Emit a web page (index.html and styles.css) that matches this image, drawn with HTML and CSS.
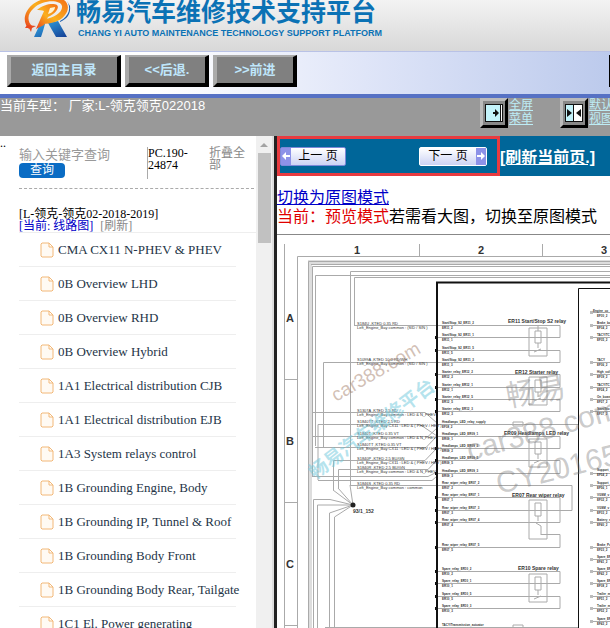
FILE: index.html
```html
<!DOCTYPE html>
<html lang="zh-CN">
  <head>
    <meta charset="UTF-8" />
    <title>畅易汽车维修技术支持平台</title>
    <link rel="stylesheet" href="styles.css">
  </head>
  <body>
    <header class="brand">
      <svg class="logo" width="48" height="38" viewBox="0 0 48 38">
        <defs>
          <linearGradient id="fire" x1="0" y1="1" x2="1" y2="0">
            <stop offset="0" stop-color="#e8401c" />
            <stop offset="0.5" stop-color="#fbb01e" />
            <stop offset="1" stop-color="#f36c16" />
          </linearGradient>
          <linearGradient id="leg" x1="0" y1="0" x2="1" y2="1">
            <stop offset="0" stop-color="#35b0ea" />
            <stop offset="1" stop-color="#153f95" />
          </linearGradient>
        </defs>
        <path d="M16 24 L21 24 L19 31 L17 37 L10 37 Z M24 23 L34 21 L43 37 L32 37 Z" fill="url(#leg)" />
        <path d="M36 21 C46 16 47 7 43 1 L46 6 C47 14 43 19 36 22 Z" fill="#1c5fae" />
        <path d="M5 29 C-2 22 0 12 8 5 C16 -2 33 -5 40 0 C48 6 43 18 31 22 C27 23 22 24 19 24 L21 19 C30 18 39 12 38 6 C36 -1 18 0 10 8 C3 14 3 21 8 26 Z" fill="url(#fire)" />
        <path d="M13 10 C20 4 29 3 33 5 C36 8 31 14 24 17 L20 25 L12 29 L20 11 C18 10 15 10 13 10 Z" fill="url(#fire)" />
        <path d="M26 8 L31 7 C31 10 28 13 24 14 Z" fill="#fff3d0" />
        <path d="M3 25 L12 26 L8 28 L7 32 L5 28 L1 28 Z" fill="#e8481f" />
      </svg>
      <div class="brand-text">
        <h1>畅易汽车维修技术支持平台</h1>
        <p>CHANG YI AUTO MAINTENANCE TECHNOLOGY SUPPORT PLATFORM</p>
      </div>
    </header>

    <div class="toolbar">
      <button type="button" class="tool wide">返回主目录</button>
      <button type="button" class="tool">&lt;&lt;后退.</button>
      <button type="button" class="tool">&gt;&gt;前进</button>
      <span class="toolbar-end"></span>
    </div>

    <div class="status">
      <span class="model">当前车型： 厂家:L-领克领克022018</span>
      <div class="views">
        <div class="view">
          <button type="button" aria-label="全屏菜单">
            <svg width="20" height="20" viewBox="0 0 20 20">
              <rect x="1" y="1" width="18" height="18" fill="#111" />
              <rect x="2" y="2" width="14" height="16" fill="#c4f3fa" />
              <rect x="17" y="2" width="1" height="16" fill="#fff" />
              <path d="M9 9h2V6l4 4l-4 4v-3H9Z" fill="#111" />
            </svg>
          </button>
          <a href="#">全屏<br />菜单</a>
        </div>
        <div class="view">
          <button type="button" aria-label="默认视图">
            <svg width="20" height="20" viewBox="0 0 20 20">
              <rect x="1" y="1" width="18" height="18" fill="#111" />
              <rect x="2" y="2" width="7" height="16" fill="#c4f3fa" />
              <rect x="10" y="2" width="8" height="16" fill="#fff" />
              <path d="M3 6l5 4l-5 4Z M17 6l-5 4l5 4Z" fill="#111" />
            </svg>
          </button>
          <a href="#">默认<br />视图</a>
        </div>
      </div>
    </div>

    <div class="frames">
      <aside class="sidebar">
        <span class="dots">..</span>
        <div class="tree">
          <form class="search">
            <div class="search-box">
              <input type="text" aria-label="关键字" placeholder="输入关键字查询" />
              <button type="button">查询</button>
            </div>
            <div class="code">PC.190-24874</div>
            <a class="fold" href="#">折叠全部</a>
          </form>
          <div class="heading">[L-领克-领克02-2018-2019]</div>
          <div class="current"><b>[当前: 线路图]</b> <a href="#">[刷新]</a></div>
          <ul class="docs">
            <li><svg class="doc"><use href="#doc" /></svg><a href="#">CMA CX11 N-PHEV &amp; PHEV</a></li>
            <li><svg class="doc"><use href="#doc" /></svg><a href="#">0B Overview LHD</a></li>
            <li><svg class="doc"><use href="#doc" /></svg><a href="#">0B Overview RHD</a></li>
            <li><svg class="doc"><use href="#doc" /></svg><a href="#">0B Overview Hybrid</a></li>
            <li><svg class="doc"><use href="#doc" /></svg><a href="#">1A1 Electrical distribution CJB</a></li>
            <li><svg class="doc"><use href="#doc" /></svg><a href="#">1A1 Electrical distribution EJB</a></li>
            <li><svg class="doc"><use href="#doc" /></svg><a href="#">1A3 System relays control</a></li>
            <li><svg class="doc"><use href="#doc" /></svg><a href="#">1B Grounding Engine, Body</a></li>
            <li><svg class="doc"><use href="#doc" /></svg><a href="#">1B Grounding IP, Tunnel &amp; Roof</a></li>
            <li><svg class="doc"><use href="#doc" /></svg><a href="#">1B Grounding Body Front</a></li>
            <li><svg class="doc"><use href="#doc" /></svg><a href="#">1B Grounding Body Rear, Tailgate</a></li>
            <li><svg class="doc"><use href="#doc" /></svg><a href="#">1C1 El. Power generating</a></li>
          </ul>
        </div>
        <div class="scrollbar">
          <svg width="8" height="4" viewBox="0 0 8 4"><path d="M0 4L4 0L8 4Z" fill="#a3a3a3" /></svg>
          <div class="thumb"></div>
        </div>
      </aside>

      <main class="content">
        <div class="pager">
          <div class="pager-box">
            <button type="button" class="page-btn">
              <span class="arrow"><svg width="8" height="8" viewBox="0 0 8 8"><path d="M0 4L4 0V3H8V5H4V8Z" fill="#fff" /></svg></span>
              <span class="page-label">上一 页</span>
            </button>
            <button type="button" class="page-btn next">
              <span class="page-label">下一 页</span>
              <span class="arrow"><svg width="8" height="8" viewBox="0 0 8 8"><path d="M8 4L4 0V3H0V5H4V8Z" fill="#fff" /></svg></span>
            </button>
          </div>
          <a class="refresh" href="#">[刷新当前页.]</a>
        </div>

        <div class="mode">
          <a href="#">切换为原图模式</a>
          <p><span>当前：预览模式</span>若需看大图，切换至原图模式</p>
        </div>

        <!-- Wiring diagram -->
        <svg class="diagram" viewBox="277 235 333 393">
          <!-- Sheet frame -->
          <path class="frame" d="M284.5 244V628M297.5 628V256.5H610M419.5 244V256M542.5 244V256M284 379.5H297M284 502.5H297M284 625.5H297" />
          <g class="grid-ref">
            <text x="357" y="254">1</text>
            <text x="481" y="254">2</text>
            <text x="604" y="254">3</text>
            <text x="290" y="322">A</text>
            <text x="290" y="445">B</text>
            <text x="290" y="568">C</text>
          </g>

          <!-- Harness wires -->
          <path class="bundle" d="M310 628V262H610" />
          <path class="wire" d="M308.500 628V261.500H610M312.500 476V266.500H610M311 264.500H610M315.500 446V275.500H610M350.500 485V271.500H610M354.500 325V277.500H610" />
          <path class="wire" d="M354 325.500H560V337.500H437M437 350.500H560V362.500H323.500V447M437 374.500H560V387.500H437M437 399.500H560V411.500H437" />
          <path class="wire" d="M312 412.500H425L437 423M318 480V424.500H420L437 436M437 424.500H578M312 436.500H428L437 428M315 447.500H426L437 436M333.500 490V460.500H425L437 448M338.500 488V469.500H428L437 460M312 476.500H428L437 472M318 480.500H432L437 476" />
          <path class="wire" d="M437 436.500H560V448.500H437M437 460.500H560V473.500H437M350 485.500H572V510.500H437M437 497.500H560V522.500H437M437 547.500H560V534.500H541" />
          <path class="wire" d="M437 571.500H560V583.500H437M437 596.500H560V608.500H437M325 627.500H578" />
          <path class="wire" d="M333 490L353 505L338 488M350 485L353 505M313.500 628V499.500H330L353 505H317.500V628M329.500 628V513L353 505L334.500 517V628" />
          <path class="box" d="M437 628V282.500H610" />
          <path class="box thin" d="M578.500 628V288.500H610" />
          <circle cx="353" cy="505" r="2.500" fill="#222" />
          <path class="pins" d="M435 337.500h3M435 350.500h3M435 374.500h3M435 387.500h3M435 399.500h3M435 411.500h3M435 448.500h3M435 460.500h3M435 473.500h3M435 497.500h3M435 510.500h3M435 522.500h3M435 547.500h3M435 571.500h3M435 583.500h3M435 596.500h3M435 608.500h3" />

          <!-- Relays -->
          <g class="relay">
            <path d="M529 328h18v28h-18zM535 331h6v12h-6zM538 343v5M534 352l7-3M538 325v6" />
            <path d="M529 377h18v28h-18zM535 380h6v12h-6zM538 392v5M534 401l7-3" />
            <path d="M529 439h18v28h-18zM535 442h6v12h-6zM538 454v5M534 463l7-3" />
            <path d="M529 500h18v39h-18zM535 503h6v13h-6zM538 516v5M536 523l5 3v9" />
            <path d="M529 574h18v28h-18zM535 577h6v13h-6zM538 590v5M534 599l7-3" />
            <path d="M513 422h10v4h-10zM513 625h10v3h-10z" />
          </g>
          <g class="relay-name">
            <text x="508" y="323">ER11 Start/Stop S2 relay</text>
            <text x="515" y="374">ER12 Starter relay</text>
            <text x="504" y="435">ER09 Headlamps LED relay</text>
            <text x="512" y="497">ER07 Rear wiper relay</text>
            <text x="518" y="570">ER10 Spare relay</text>
            <text x="353" y="513">93/1_152</text>
          </g>

          <g class="note">
            <text x="357" y="325">S184U ,KTED 0.35 RD<tspan x="357" dy="4">Left_Engine_Bay common : (SID / SIN )</tspan></text>
            <text x="357" y="361">S1099A ,KTED 10.0 RD/WH<tspan x="357" dy="4">Left_Engine_Bay common : (SID / SIN )</tspan></text>
            <text x="357" y="412">S1307A ,KTED 2.5 RD<tspan x="357" dy="4">Left_Engine_Bay common : LED &amp; N_PHEV</tspan></text>
            <text x="357" y="423">S1840TT ,KTED 2.5 RD<tspan x="357" dy="4">Left_Engine_Bay CX11 : LED &amp; ( PHEV / HEV )</tspan></text>
            <text x="357" y="435">S1840T ,KTED 0.35 VT<tspan x="357" dy="4">Left_Engine_Bay common : LED &amp; N_PHEV</tspan></text>
            <text x="357" y="446">S1840TT ,KTED 0.35 VT<tspan x="357" dy="4">Left_Engine_Bay CX11 : LED &amp; ( PHEV / HEV )</tspan></text>
            <text x="357" y="460">S1840P ,KTED 2.5 BU/GN<tspan x="357" dy="4">Left_Engine_Bay CX11 : LED &amp; ( PHEV / HEV )</tspan></text>
            <text x="357" y="469">S1840R ,KTED 2.5 BU/GN<tspan x="357" dy="4">Left_Engine_Bay common : LED &amp; N_PHEV</tspan></text>
            <text x="357" y="485">S1846S ,KTED 0.35 RD<tspan x="357" dy="4">Left_Engine_Bay common : common</tspan></text>
          </g>

          <g class="note pin">
            <text x="442" y="324">Start/Stop_S2_ER11_2<tspan x="442" dy="5">ER11_2</tspan></text>
            <text x="442" y="336">Start/Stop_S2_ER11_1<tspan x="442" dy="5">ER11_1</tspan></text>
            <text x="442" y="349">Start/Stop_S2_ER11_5<tspan x="442" dy="5">ER11_5</tspan></text>
            <text x="442" y="361">Start/Stop_S2_ER11_3<tspan x="442" dy="5">ER11_3</tspan></text>
            <text x="442" y="373">Starter_relay_ER12_2<tspan x="442" dy="5">ER12_2</tspan></text>
            <text x="442" y="386">Starter_relay_ER12_1<tspan x="442" dy="5">ER12_1</tspan></text>
            <text x="442" y="398">Starter_relay_ER12_5<tspan x="442" dy="5">ER12_5</tspan></text>
            <text x="442" y="410">Starter_relay_ER12_3<tspan x="442" dy="5">ER12_3</tspan></text>
            <text x="442" y="423">Headlamps_LED_relay_supply<tspan x="442" dy="5">EF38_2</tspan></text>
            <text x="442" y="435">Headlamps_LED_ER09_1<tspan x="442" dy="5">ER09_1</tspan></text>
            <text x="442" y="447">Headlamps_LED_ER09_2<tspan x="442" dy="5">ER09_2</tspan></text>
            <text x="442" y="459">Headlamps_LED_ER09_5<tspan x="442" dy="5">ER09_5</tspan></text>
            <text x="442" y="472">Headlamps_LED_ER09_3<tspan x="442" dy="5">ER09_3</tspan></text>
            <text x="442" y="484">Rear_wiper_relay_ER07_2<tspan x="442" dy="5">ER07_2</tspan></text>
            <text x="442" y="496">Rear_wiper_relay_ER07_1<tspan x="442" dy="5">ER07_1</tspan></text>
            <text x="442" y="509">Rear_wiper_relay_ER07_3<tspan x="442" dy="5">ER07_3</tspan></text>
            <text x="442" y="521">Rear_wiper_relay_ER07_4<tspan x="442" dy="5">ER07_4</tspan></text>
            <text x="442" y="546">Rear_wiper_relay_ER07_5<tspan x="442" dy="5">ER07_5</tspan></text>
            <text x="442" y="570">Spare_relay_ER10_2<tspan x="442" dy="5">ER10_2</tspan></text>
            <text x="442" y="582">Spare_relay_ER10_1<tspan x="442" dy="5">ER10_1</tspan></text>
            <text x="442" y="595">Spare_relay_ER10_5<tspan x="442" dy="5">ER10_5</tspan></text>
            <text x="442" y="607">Spare_relay_ER10_3<tspan x="442" dy="5">ER10_3</tspan></text>
            <text x="442" y="626">TACY/Transmission_actuator</text>
          </g>

          <path class="wire" d="M593 312.500H610M593 325.500H610M593 337.500H610M593 362.500H610M593 374.500H610M593 387.500H610M593 399.500H610M593 411.500H610M593 473.500H610M593 485.500H610M593 497.500H610M593 510.500H610M593 522.500H610M593 547.500H610M593 559.500H610M593 571.500H610M593 583.500H610M593 596.500H610M593 608.500H610M593 621.500H610" />
          <path class="stubs" d="M590 312.500h3M590 325.500h3M590 337.500h3M590 362.500h3M590 374.500h3M590 387.500h3M590 399.500h3M590 411.500h3M590 473.500h3M590 485.500h3M590 497.500h3M590 510.500h3M590 522.500h3M590 547.500h3M590 559.500h3M590 571.500h3M590 583.500h3M590 596.500h3M590 608.500h3M590 621.500h3" />
          <g class="note pin">
            <text x="593" y="312">Engine_co<tspan x="597" dy="5">EF30_2</tspan></text>
            <text x="597" y="324">Brake_bo<tspan x="597" dy="5">EF34_2</tspan></text>
            <text x="597" y="336">TACY/TC<tspan x="597" dy="5">EF35_2</tspan></text>
            <text x="597" y="361">TACY<tspan x="597" dy="5">EF36_2</tspan></text>
            <text x="597" y="373">High_volt<tspan x="597" dy="5">EF39_2</tspan></text>
            <text x="597" y="386">TACY/TC<tspan x="597" dy="5">EF24_2</tspan></text>
            <text x="597" y="398">On_board<tspan x="597" dy="5">EF27_2</tspan></text>
            <text x="597" y="410">Start/Sto<tspan x="597" dy="5">EF37_2</tspan></text>
            <text x="597" y="471">Support_<tspan x="597" dy="5">EF54_2</tspan></text>
            <text x="597" y="484">Support_<tspan x="597" dy="5">EF56_1</tspan></text>
            <text x="597" y="496">VGSM_v<tspan x="597" dy="5">EF32_2</tspan></text>
            <text x="597" y="509">VGSM_v<tspan x="597" dy="5">EF33_2</tspan></text>
            <text x="597" y="521">Battery_s<tspan x="597" dy="5">EF40_2</tspan></text>
            <text x="597" y="546">Brake_Pu<tspan x="597" dy="5">EF23_2</tspan></text>
            <text x="597" y="558">Spare_EF<tspan x="597" dy="5">EF41_2</tspan></text>
            <text x="597" y="570">Spare_EF<tspan x="597" dy="5">EF42_2</tspan></text>
            <text x="597" y="582">Spare_EF<tspan x="597" dy="5">EF38_2</tspan></text>
            <text x="597" y="595">Trailer_m<tspan x="597" dy="5">EF51_2</tspan></text>
            <text x="597" y="607">Trailer_m<tspan x="597" dy="5">EF52_2</tspan></text>
            <text x="597" y="620">Spare_EF<tspan x="597" dy="5">EF43_2</tspan></text>
          </g>

          <!-- Watermarks -->
          <g class="mark">
            <text class="tan" transform="translate(336 402) rotate(-30)">car388.com</text>
            <text class="cyan" transform="translate(315 480) rotate(-37)">畅易汽车维修平台</text>
            <text class="gray" transform="translate(508 407) rotate(-10)">畅易</text>
            <text class="gray" transform="translate(470 461) rotate(-16)">car388.com</text>
            <text class="gray" transform="translate(499 494) rotate(-14)">CY20165</text>
          </g>
        </svg>
      </main>
    </div>

    <svg width="0" height="0">
      <symbol id="doc" viewBox="0 0 14 16">
        <path d="M2 1H9L13 5V14L12 15H2L1 14V2ZM9 1V5H13" fill="#fffaf3" stroke="#f2b878" />
      </symbol>
    </svg>
  </body>
</html>
```

FILE: styles.css
```css
* {
  box-sizing: border-box;
}

body {
  margin: 0;
  height: 100vh;
  display: flex;
  flex-direction: column;
  overflow: hidden;
  background: #fff;
  font-family: "Liberation Sans", "Noto Sans CJK SC", sans-serif;
  font-size: 12px;
}

button {
  padding: 0;
  font-family: inherit;
  cursor: pointer;
}

/* Header */
.brand {
  flex: none;
  display: flex;
  height: 51px;
  padding-left: 24px;
  gap: 4px;
  background: linear-gradient(#f3f3f3, #d8d8d8);
  color: #0b72b5;
}

.brand h1 {
  margin: 0;
  font-size: 25px;
  line-height: 25px;
  white-space: nowrap;
}

.brand p {
  margin: 1px 0 0 2px;
  font-size: 9px;
  font-weight: bold;
  line-height: 14px;
  white-space: nowrap;
}

.toolbar {
  flex: none;
  display: flex;
  gap: 4px;
  height: 47px;
  padding: 3px 0 0 7px;
  border-top: 1px solid #b9c2e6;
  border-bottom: 4px solid #5671c4;
  background: linear-gradient(90deg, #fff 0%, #fff 25%, #dfe5f8 60%, #bccaec 100%);
}

.tool {
  width: 84px;
  height: 32px;
  border: 4px solid;
  border-color: #aaa #000 #000 #aaa;
  border-top-width: 2px;
  background: #808080;
  color: #bfe6fb;
  font-size: 13px;
  font-weight: bold;
  line-height: 16px;
}

.tool.wide {
  width: 114px;
}

.toolbar-end {
  width: 1px;
  height: 32px;
  margin-left: auto;
  background: #000;
}

.status {
  flex: none;
  display: flex;
  justify-content: space-between;
  height: 38px;
  overflow: hidden;
  background: #999;
  color: #fff;
}

.model {
  font-size: 13px;
  line-height: 15px;
}

.views {
  display: flex;
  gap: 27px;
  width: 130px;
  overflow: hidden;
}

.view {
  flex: none;
  display: flex;
  gap: 1px;
}

.view button {
  display: flex;
  align-items: center;
  justify-content: center;
  width: 28px;
  height: 30px;
  border: 3px solid;
  border-color: #bbb #000 #000 #bbb;
  background: #888;
}

.view a {
  color: #bdecf5;
  line-height: 14px;
}

.frames {
  flex: 1;
  display: flex;
  min-height: 0;
}

/* Document tree */
.sidebar {
  flex: none;
  position: relative;
  display: flex;
  width: 277px;
  border-right: 3px solid #222;
  font-family: "Liberation Serif", "Noto Sans CJK SC", serif;
}

.dots {
  position: absolute;
  top: 0;
  left: 0;
  line-height: 14px;
}

.tree {
  flex: 1;
  min-width: 0;
  padding-left: 19px;
  overflow: hidden;
}

.search {
  display: flex;
  height: 53px;
  margin-right: 2px;
  padding-top: 11px;
  border-bottom: 1px dashed #aaa;
  line-height: 12px;
}

.search-box {
  width: 128px;
}

.search-box input {
  display: block;
  width: 120px;
  height: 16px;
  padding: 0;
  border: 0;
  font-family: inherit;
  font-size: 13px;
}

.search-box input::placeholder {
  color: #999;
}

.search-box button {
  display: block;
  width: 46px;
  height: 15px;
  border: 0;
  border-radius: 4px;
  background: #0a6cc4;
  color: #fff;
  font-size: 12px;
  line-height: 15px;
}

.code {
  width: 62px;
  height: 32px;
  border-left: 1px solid #aaa;
}

.fold {
  width: 40px;
  color: #888;
  text-decoration: none;
}

.heading {
  margin-top: 19px;
  line-height: 12px;
}

.current {
  height: 13px;
  border-bottom: 1px solid #eee;
  line-height: 12px;
}

.current b {
  color: #0000c8;
  font-weight: normal;
}

.current a {
  margin-left: 4px;
  color: #888;
  text-decoration: none;
}

.docs {
  width: 217px;
  margin: 0;
  padding: 0;
  list-style: none;
}

.docs li {
  display: flex;
  align-items: center;
  gap: 4px;
  height: 34px;
  padding-left: 21px;
  border-bottom: 1px solid #eee;
}

.doc {
  flex: none;
  width: 14px;
  height: 16px;
}

.docs a {
  color: #243447;
  font-size: 13px;
  text-decoration: none;
  white-space: nowrap;
}

.scrollbar {
  display: flex;
  flex-direction: column;
  align-items: center;
  gap: 6px;
  width: 18px;
  padding-top: 7px;
  border-right: 2px solid #ddd;
  background: #f0f0f0;
}

.thumb {
  width: 13px;
  height: 90px;
  background: #c1c1c1;
}

/* Diagram page */
.content {
  flex: 1;
  min-width: 0;
  overflow: hidden;
}

.pager {
  display: flex;
  align-items: center;
  height: 40px;
  background: #006699;
}

.pager-box {
  display: flex;
  align-items: center;
  justify-content: space-between;
  width: 223px;
  height: 40px;
  padding-right: 10px;
  border: 3px solid #e83b40;
}

.page-btn {
  display: flex;
  width: 66px;
  height: 19px;
  border: 1px solid #7c88d8;
  border-radius: 2px;
  background: linear-gradient(#fff, #ccd3f4);
  color: #000;
  font-size: 12px;
  line-height: 17px;
}

.page-btn.next {
  width: 68px;
  border-color: #fff;
}

.arrow {
  display: flex;
  align-items: center;
  justify-content: center;
  width: 10px;
  height: 17px;
  background: #8d92e8;
}

.page-label {
  flex: 1;
}

.refresh {
  color: #fff;
  font-size: 16px;
  font-weight: bold;
  white-space: nowrap;
}

.mode {
  padding-top: 12px;
  border-bottom: 1px solid #888;
  font-size: 16px;
  line-height: 19px;
  height: 59px;
  white-space: nowrap;
}

.mode a {
  color: #0000c8;
}

.mode p {
  margin: 0;
}

.mode span {
  color: #e00000;
}

.diagram {
  display: block;
  width: 100%;
  fill: none;
  font-family: "Liberation Sans", "Noto Sans CJK SC", sans-serif;
}

.frame {
  stroke: #aaa;
}

.wire {
  stroke: #aaa;
}

.bundle {
  stroke: #ddd;
  stroke-width: 4px;
}

.box {
  stroke: #111;
  stroke-width: 2px;
}

.box.thin {
  stroke-width: 1px;
}

.pins {
  stroke: #111;
  stroke-width: 3px;
}

.stubs {
  stroke: #bbb;
  stroke-width: 3px;
}

.relay {
  stroke: #aaa;
}

.grid-ref {
  fill: #333;
  font-size: 11px;
  font-weight: bold;
  text-anchor: middle;
}

.relay-name {
  fill: #333;
  font-size: 5px;
  font-weight: bold;
}

.note {
  fill: #333;
  font-size: 4px;
}

.note.pin {
  font-size: 3px;
  font-weight: bold;
}

.mark {
  font-size: 30px;
}

.gray {
  fill: rgba(120, 120, 120, 0.4);
}

.tan {
  fill: rgba(165, 130, 110, 0.5);
  font-size: 19px;
}

.cyan {
  fill: rgba(110, 200, 220, 0.5);
  font-size: 19px;
  font-weight: bold;
}
```
